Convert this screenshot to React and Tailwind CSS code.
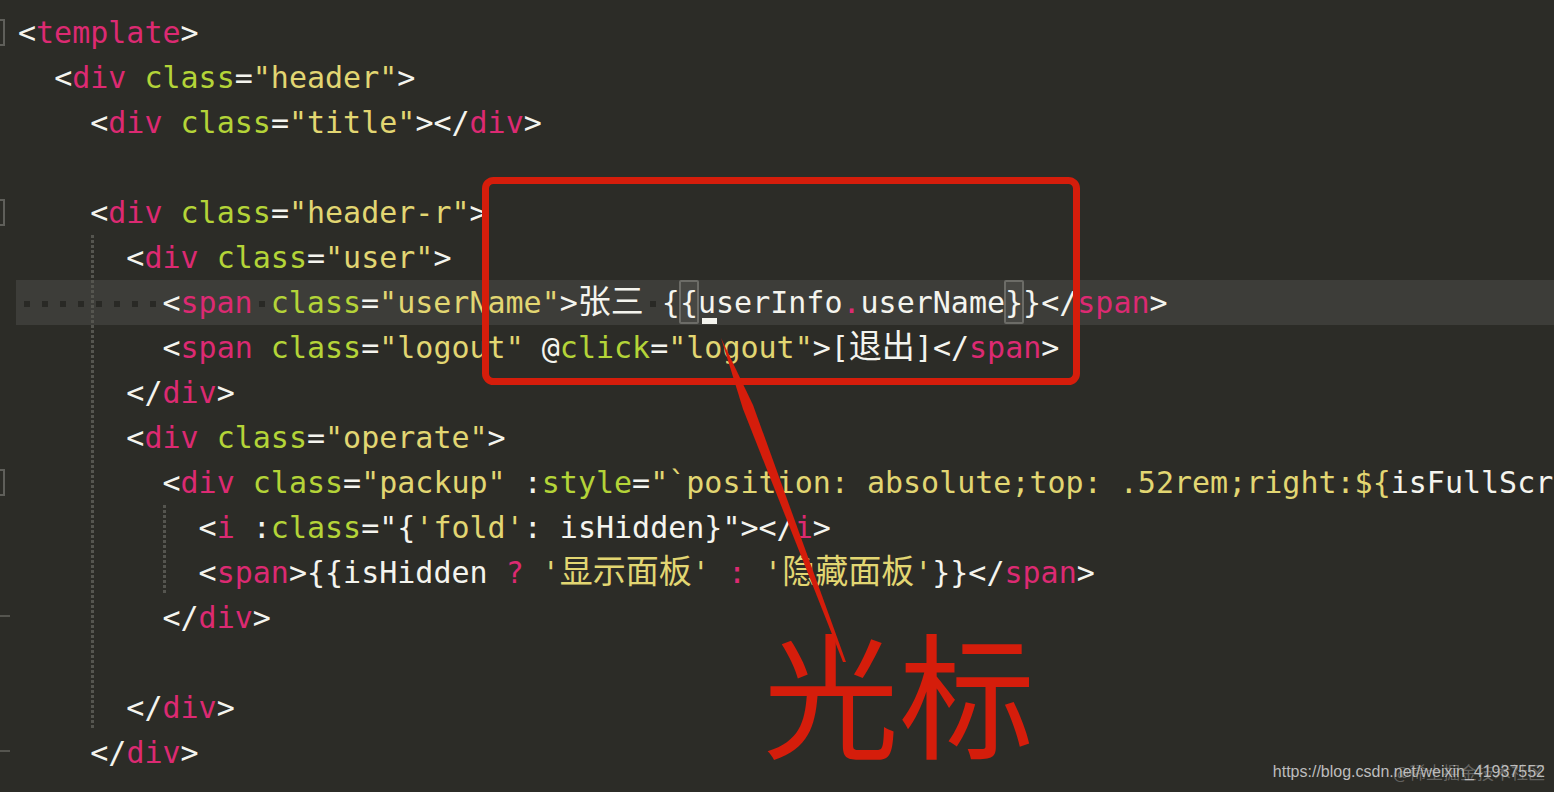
import React from "react";

// colours of the editor theme
const C = {
  w: "text-[#f4f4ee]",
  p: "text-[#dc2a72]",
  g: "text-[#b4d438]",
  y: "text-[#e2d672]",
};

// each line: { indent, toks, hl (current line), guides (indent columns with a guide), mark (gutter) }
const lines = [
  { indent: 0, mark: "fold", toks: [["w", "<"], ["p", "template"], ["w", ">"]] },
  { indent: 2, toks: [["w", "<"], ["p", "div"], ["w", " "], ["g", "class"], ["w", "="], ["y", '"header"'], ["w", ">"]] },
  { indent: 4, toks: [["w", "<"], ["p", "div"], ["w", " "], ["g", "class"], ["w", "="], ["y", '"title"'], ["w", "></"], ["p", "div"], ["w", ">"]] },
  { indent: 0, toks: [] },
  { indent: 4, mark: "fold", toks: [["w", "<"], ["p", "div"], ["w", " "], ["g", "class"], ["w", "="], ["y", '"header-r"'], ["w", ">"]] },
  { indent: 6, guides: [4], toks: [["w", "<"], ["p", "div"], ["w", " "], ["g", "class"], ["w", "="], ["y", '"user"'], ["w", ">"]] },
  {
    indent: 8,
    hl: true,
    guides: [4],
    toks: [
      ["w", "<"], ["p", "span"], ["dot"], ["g", "class"], ["w", "="], ["y", '"userName"'],
      ["w", ">张三"], ["dot"], ["w", "{"], ["box", "{"], ["cur", "u"], ["w", "serInfo"],
      ["p", "."], ["w", "userName"], ["box", "}"], ["w", "}</"], ["p", "span"], ["w", ">"],
    ],
  },
  {
    indent: 8,
    guides: [4],
    toks: [
      ["w", "<"], ["p", "span"], ["w", " "], ["g", "class"], ["w", "="], ["y", '"logout"'], ["w", " @"],
      ["g", "click"], ["w", "="], ["y", '"logout"'], ["w", ">[退出]</"], ["p", "span"], ["w", ">"],
    ],
  },
  { indent: 6, guides: [4], toks: [["w", "</"], ["p", "div"], ["w", ">"]] },
  { indent: 6, guides: [4], toks: [["w", "<"], ["p", "div"], ["w", " "], ["g", "class"], ["w", "="], ["y", '"operate"'], ["w", ">"]] },
  {
    indent: 8,
    guides: [4],
    mark: "fold",
    toks: [
      ["w", "<"], ["p", "div"], ["w", " "], ["g", "class"], ["w", "="], ["y", '"packup"'],
      ["w", " :"], ["g", "style"], ["w", "="], ["y", '"`position: absolute;top: .52rem;right:${'],
      ["w", "isFullScreen ? '1.5rem' : '.2rem'"], ["y", '}`"'], ["w", ">"],
    ],
  },
  {
    indent: 10,
    guides: [4, 8],
    toks: [["w", "<"], ["p", "i"], ["w", " :"], ["g", "class"], ["w", '="{'], ["y", "'fold'"], ["w", ': isHidden}"></'], ["p", "i"], ["w", ">"]],
  },
  {
    indent: 10,
    guides: [4, 8],
    toks: [
      ["w", "<"], ["p", "span"], ["w", ">{{isHidden "], ["p", "?"], ["w", " "], ["y", "'显示面板'"],
      ["w", " "], ["p", ":"], ["w", " "], ["y", "'隐藏面板'"], ["w", "}}</"], ["p", "span"], ["w", ">"],
    ],
  },
  { indent: 8, guides: [4], mark: "end", toks: [["w", "</"], ["p", "div"], ["w", ">"]] },
  { indent: 0, guides: [4], toks: [] },
  { indent: 6, guides: [4], toks: [["w", "</"], ["p", "div"], ["w", ">"]] },
  { indent: 4, mark: "end", toks: [["w", "</"], ["p", "div"], ["w", ">"]] },
];

// CJK runs get their own font, sized so each glyph is as wide as in the editor
function Txt({ s }) {
  return s.split(/([\u3400-\u9fff]+)/).map((part, i) =>
    /[\u3400-\u9fff]/.test(part) ? (
      <span key={i} className="font-['Noto_Sans_CJK_SC',sans-serif] text-[33px] leading-none">
        {part}
      </span>
    ) : (
      part
    )
  );
}

function Dot() {
  return <span className="mt-[2px] h-[6px] w-[6px] bg-[#292925]" />;
}

// one character cell of indentation, with optional guide and whitespace dot
function IndentCell({ guide, dot }) {
  if (!guide && !dot) return " ";
  return (
    <span className="relative inline-flex h-[45px] w-[18.06px] items-center justify-center align-top">
      {guide && (
        <span className="absolute left-[1px] top-0 h-full w-[3px] bg-[repeating-linear-gradient(to_bottom,#55554f_0px,#55554f_3px,transparent_3px,transparent_5px)]" />
      )}
      {dot && <Dot />}
    </span>
  );
}

function Token({ t }) {
  const [kind, text] = t;
  if (kind === "dot") return <IndentCell dot />;
  if (kind === "box") {
    return (
      <span className={`relative ${C.w}`}>
        <span className="absolute -top-[5px] -bottom-[4px] -left-[1px] -right-[1px] rounded-[2px] border-2 border-[#6c6c67] bg-white/5" />
        {text}
      </span>
    );
  }
  if (kind === "cur") {
    return (
      <span className={`relative ${C.w}`}>
        {text}
        <span className="absolute -bottom-[4px] left-[4px] h-[6px] w-[15px] bg-[#f4f4ee]" />
      </span>
    );
  }
  return (
    <span className={C[kind]}>
      <Txt s={text} />
    </span>
  );
}

function Gutter({ mark }) {
  return (
    <div className="flex w-[16px] shrink-0 items-center">
      {mark === "fold" && <div className="h-[27px] w-[5px] border-y-2 border-r-2 border-[#5f5f5a]" />}
      {mark === "end" && <div className="mb-[3px] h-[2px] w-[10px] bg-[#55554f]" />}
    </div>
  );
}

function Line({ line }) {
  const { indent, toks, hl, guides = [], mark } = line;
  const cols = Math.max(indent, guides.length ? Math.max(...guides) + 1 : 0);
  return (
    <div className="flex h-[45px]">
      <Gutter mark={mark} />
      <div className={`min-w-0 flex-1 whitespace-pre pl-[2px] ${hl ? "bg-[#3d3d39]" : ""}`}>
        {Array.from({ length: cols }, (_, c) => (
          <IndentCell key={c} guide={guides.includes(c)} dot={hl} />
        ))}
        {toks.map((t, j) => (
          <Token key={j} t={t} />
        ))}
      </div>
    </div>
  );
}

export default function App() {
  return (
    <div className="relative h-[792px] w-[1554px] overflow-hidden bg-[#2c2c27]">
      {/* code */}
      <div className="flex flex-col pt-[10px] font-['DejaVu_Sans_Mono',monospace] text-[30px] leading-[45px] text-[#f4f4ee]">
        {lines.map((line, i) => (
          <Line key={i} line={line} />
        ))}
      </div>

      {/* red annotation drawn over the editor */}
      <svg className="pointer-events-none absolute inset-0" width="1554" height="792" viewBox="0 0 1554 792">
        <rect x="485.5" y="180.5" width="591" height="201" rx="8" fill="none" stroke="#d51d0b" strokeWidth="7" />
        <polygon points="721,338 753,405 846,662 843,662 743,409" fill="#d51d0b" />
      </svg>
      <div className="absolute left-[763px] top-[622px] font-['Noto_Sans_CJK_SC',sans-serif] text-[136px] leading-none text-[#d51d0b]">
        光标
      </div>

      {/* watermark */}
      <div className="absolute bottom-[8px] right-[9px] font-['Liberation_Sans',sans-serif] text-[16px] text-[#bdbdbd]">
        https://blog.csdn.net/weixin_41937552
        <span className="absolute -top-[1px] right-0 font-['Noto_Sans_CJK_SC',sans-serif] text-[17px] text-[#bdbdbd]/40">
          @稀土掘金技术社区
        </span>
      </div>
    </div>
  );
}
